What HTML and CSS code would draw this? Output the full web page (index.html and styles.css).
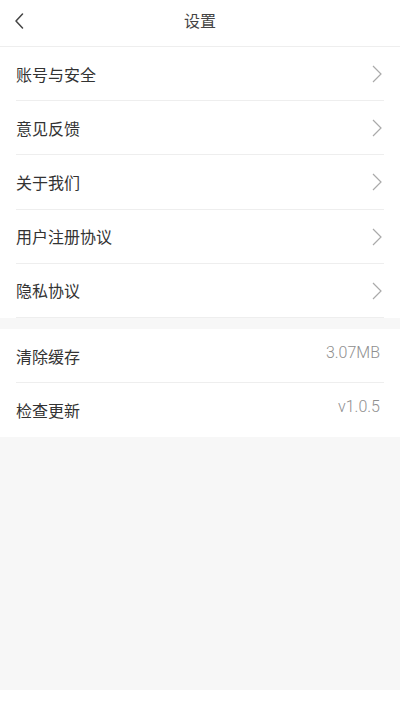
FILE: index.html
```html
<!DOCTYPE html>
<html lang="zh">
<head>
<meta charset="utf-8">
<link rel="stylesheet" href="styles.css">
</head>
<body>
<div class="page">
  <header class="topbar">
    <span class="back">
      <svg width="10" height="16" viewBox="0 0 10 16"><path d="M8.5 1 L2 8 L8.5 15" fill="none" stroke="#444" stroke-width="1.5" stroke-linecap="round" stroke-linejoin="round"/></svg>
    </span>
    <h1 class="title">设置</h1>
  </header>
  <section class="group">
    <div class="row"><span class="label">账号与安全</span><span class="chev"><svg width="10" height="18" viewBox="0 0 10 18"><path d="M1 1 L9 9 L1 17" fill="none" stroke="#aaa" stroke-width="1.2"/></svg></span></div>
    <div class="row"><span class="label">意见反馈</span><span class="chev"><svg width="10" height="18" viewBox="0 0 10 18"><path d="M1 1 L9 9 L1 17" fill="none" stroke="#aaa" stroke-width="1.2"/></svg></span></div>
    <div class="row"><span class="label">关于我们</span><span class="chev"><svg width="10" height="18" viewBox="0 0 10 18"><path d="M1 1 L9 9 L1 17" fill="none" stroke="#aaa" stroke-width="1.2"/></svg></span></div>
    <div class="row"><span class="label">用户注册协议</span><span class="chev"><svg width="10" height="18" viewBox="0 0 10 18"><path d="M1 1 L9 9 L1 17" fill="none" stroke="#aaa" stroke-width="1.2"/></svg></span></div>
    <div class="row"><span class="label">隐私协议</span><span class="chev"><svg width="10" height="18" viewBox="0 0 10 18"><path d="M1 1 L9 9 L1 17" fill="none" stroke="#aaa" stroke-width="1.2"/></svg></span></div>
  </section>
  <section class="group group2">
    <div class="row"><span class="label">清除缓存</span><span class="value">3.07MB</span></div>
    <div class="row last"><span class="label">检查更新</span><span class="value">v1.0.5</span></div>
  </section>
  <div class="filler"></div>
  <footer class="bottom"></footer>
</div>
</body>
</html>
```

FILE: styles.css
```css
* { box-sizing: border-box; }
html, body { margin: 0; padding: 0; }
body {
  font-family: "Noto Sans CJK SC", "Noto Sans", sans-serif;
  background: #f7f7f7;
  color: #333;
}
.page {
  width: 400px;
  height: 711px;
  display: flex;
  flex-direction: column;
}
.topbar {
  height: 47px;
  background: #fff;
  border-bottom: 1px solid #eeeeee;
  display: flex;
  align-items: center;
  justify-content: center;
  position: relative;
}
.back {
  position: absolute;
  left: 14px;
  top: 13px;
  display: flex;
}
.title {
  margin: 0;
  font-size: 16px;
  font-weight: normal;
  color: #444;
  line-height: 20px;
  margin-top: -6px;
}
.group {
  background: #fff;
  padding: 0 16px;
}
.group2 { margin-top: 11px; }
.row {
  height: 54.2px;
  display: flex;
  align-items: center;
  justify-content: space-between;
  border-bottom: 1px solid #eeeeee;
}
.row.last { border-bottom: none; }
.label {
  font-size: 16px;
  color: #333;
  line-height: 20px;
}
.chev {
  display: flex;
  margin-right: 2px;
  margin-top: 1px;
}
.value {
  font-family: Roboto, "Liberation Sans", sans-serif;
  font-size: 16px;
  font-weight: 300;
  color: #8f8f8f;
  margin-right: 4px;
  margin-bottom: 7px;
}
.filler { flex: 1; }
.bottom {
  height: 21px;
  background: #fff;
}
```
